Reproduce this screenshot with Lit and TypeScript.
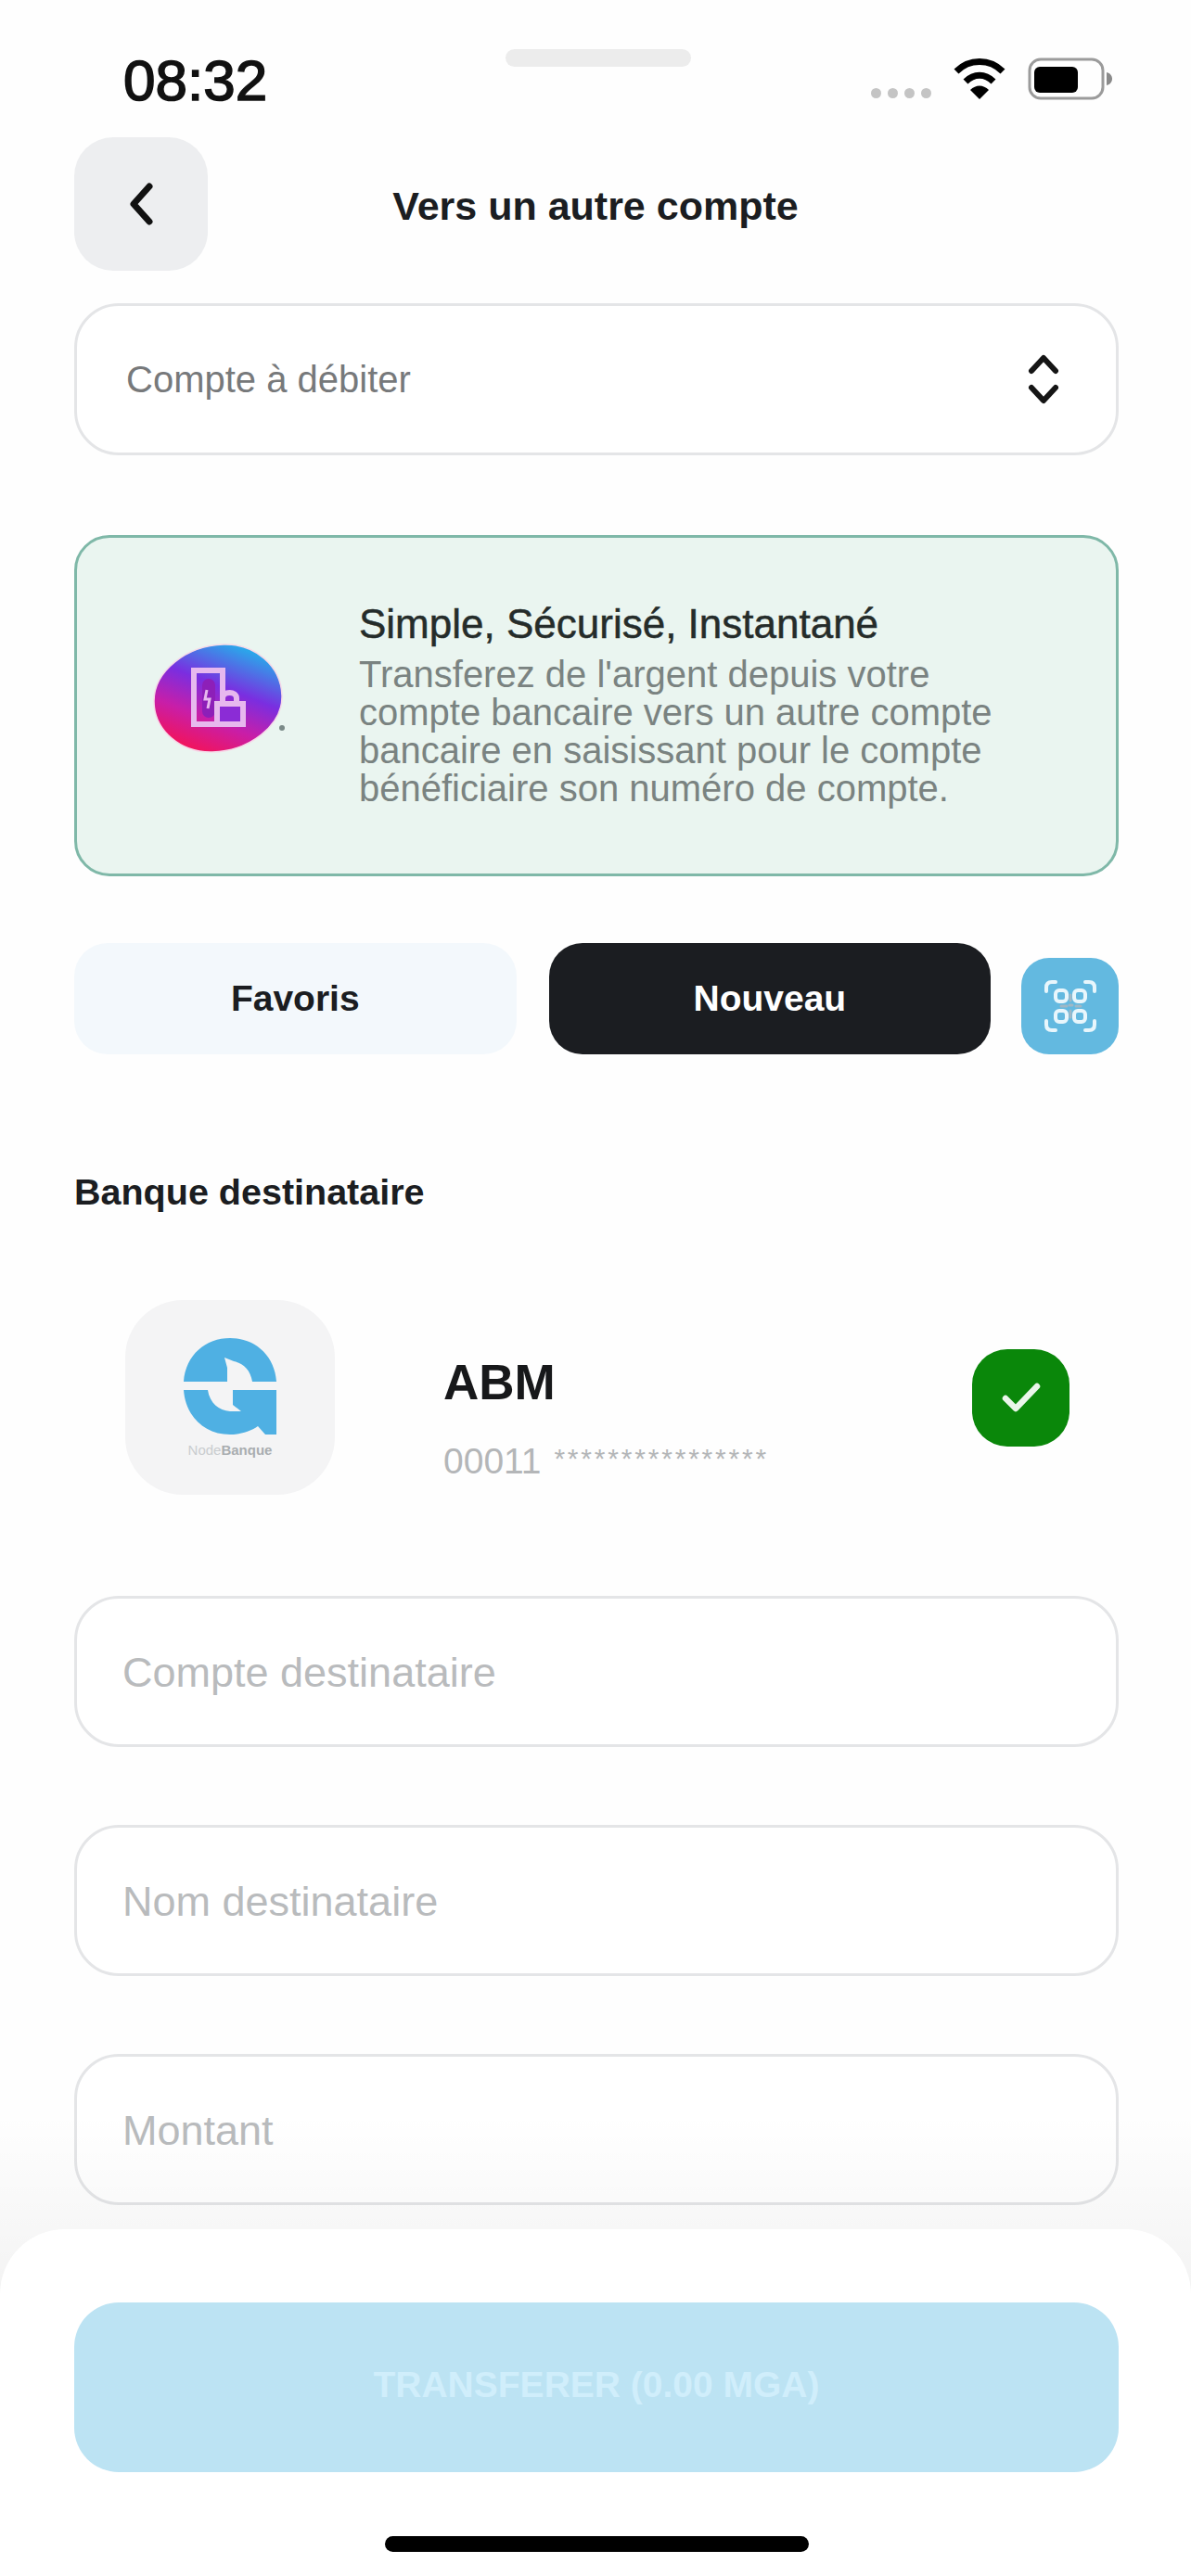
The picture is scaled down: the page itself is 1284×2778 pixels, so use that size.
import { LitElement, html, css } from 'lit';
import { customElement } from 'lit/decorators.js';

@customElement('app-root')
export class AppRoot extends LitElement {
  static styles = css`
    :host {
      display: block;
      position: relative;
      width: 1284px;
      height: 2778px;
      overflow: hidden;
      background: #fefefe;
      font-family: 'Liberation Sans', Arial, sans-serif;
      color: #1b1d21;
    }

    /* ── Status bar ── */
    .status {
      height: 148px;
      box-sizing: border-box;
      padding: 53px 84px 0 133px;
      display: grid;
      grid-template-columns: 412px 200px 1fr;
      align-items: start;
    }
    .time {
      font-size: 62px;
      line-height: 68px;
      color: #111;
      -webkit-text-stroke: 1.6px #111;
    }
    .island {
      height: 19px;
      border-radius: 10px;
      background: #ececec;
    }
    .status-icons {
      display: flex;
      justify-content: flex-end;
      align-items: flex-start;
      gap: 24px;
      padding-top: 9px;
    }
    .dots {
      display: flex;
      gap: 7px;
      margin-top: 33px;
    }
    .dots i {
      width: 11px;
      height: 11px;
      border-radius: 50%;
      background: #c4c4c4;
    }

    /* ── Header ── */
    .header {
      height: 144px;
      margin: 0 80px;
      display: grid;
      grid-template-columns: 144px 1fr 144px;
      align-items: center;
    }
    .back {
      width: 144px;
      height: 144px;
      border-radius: 42px;
      background: #edeef0;
      display: flex;
      align-items: center;
      justify-content: center;
    }
    .title {
      padding-top: 4px;
      text-align: center;
      font-size: 43px;
      font-weight: 700;
    }

    .content {
      padding: 35px 78px 0 80px;
      display: flex;
      flex-direction: column;
    }

    .field {
      height: 163px;
      padding: 2px 76px 0 49px;
      box-sizing: border-box;
      border: 3px solid #e4e5e7;
      border-radius: 48px;
      background: #fff;
      display: flex;
      align-items: center;
      justify-content: space-between;
      font-size: 45px;
      color: #b9bbbd;
    }
    .field.select {
      height: 164px;
      padding: 0 60px 0 53px;
      font-size: 40px;
      color: #77797b;
    }

    /* ── Info banner ── */
    .banner {
      margin-top: 86px;
      height: 368px;
      box-sizing: border-box;
      border: 3px solid #7fb8a8;
      border-radius: 38px;
      background: #eaf5f0;
      display: flex;
      align-items: flex-start;
      padding: 67px 0 0 82px;
    }
    .blob {
      flex: none;
      margin-top: 47px;
      margin-right: 80px;
    }
    .banner h2 {
      margin: 0 0 8px;
      font-size: 44px;
      line-height: 52px;
      font-weight: 400;
      color: #252c2a;
      -webkit-text-stroke: 0.5px #252c2a;
    }
    .banner p {
      margin: 0;
      font-size: 40px;
      line-height: 41px;
      color: #7a8381;
    }

    /* ── Tabs ── */
    .tabs {
      margin-top: 72px;
      display: flex;
      align-items: flex-end;
    }
    .tab {
      width: 477px;
      height: 120px;
      border-radius: 36px;
      display: flex;
      align-items: center;
      justify-content: center;
      font-size: 39px;
      font-weight: 700;
      background: #f3f8fc;
    }
    .tab.active {
      margin-left: 35px;
      background: #1b1d21;
      color: #fff;
    }
    .qr {
      margin-left: 33px;
      width: 105px;
      height: 104px;
      border-radius: 30px;
      background: #63b9e0;
      display: flex;
      align-items: center;
      justify-content: center;
    }

    .label {
      margin-top: 126px;
      font-size: 39.5px;
      line-height: 44px;
      font-weight: 700;
    }

    /* ── Bank row ── */
    .bank {
      margin-top: 95px;
      display: flex;
      align-items: center;
      padding: 0 53px 0 55px;
    }
    .tile {
      width: 226px;
      height: 210px;
      border-radius: 62px;
      background: #f4f4f5;
      display: flex;
      flex-direction: column;
      align-items: center;
      justify-content: center;
      flex: none;
    }
    .tile span {
      font-size: 15px;
      line-height: 16px;
      margin-top: 9px;
      font-weight: 700;
      color: #a9adb0;
    }
    .tile span em {
      font-style: normal;
      font-weight: 400;
      color: #c9cccf;
    }
    .bank-text {
      flex: 1;
      margin-left: 117px;
      padding-top: 43px;
    }
    .bank-name {
      font-size: 53px;
      line-height: 64px;
      font-weight: 700;
      color: #17181a;
    }
    .bank-num {
      margin-top: 27px;
      font-size: 39px;
      line-height: 46px;
      color: #b4b6b8;
    }
    .bank-num small {
      margin-left: 3px;
      font-size: 30px;
      letter-spacing: 2.8px;
      vertical-align: 6px;
    }
    .check {
      width: 105px;
      height: 105px;
      border-radius: 38px;
      background: #0a870a;
      display: flex;
      align-items: center;
      justify-content: center;
      flex: none;
    }

    .fields {
      margin-top: 109px;
      display: flex;
      flex-direction: column;
      gap: 84px;
    }

    /* ── Bottom sheet ── */
    .fade {
      position: absolute;
      left: 0;
      right: 0;
      bottom: 270px;
      height: 230px;
      background: linear-gradient(rgba(0, 0, 0, 0), rgba(0, 0, 0, 0.05));
    }
    .sheet {
      position: absolute;
      left: 0;
      right: 0;
      bottom: 0;
      height: 374px;
      box-sizing: border-box;
      padding: 79px 78px 0 80px;
      background: #fff;
      border-radius: 70px 70px 0 0;
    }
    .submit {
      height: 183px;
      padding-bottom: 6px;
      box-sizing: border-box;
      border-radius: 48px;
      background: #bce3f3;
      color: #d0eefb;
      display: flex;
      align-items: center;
      justify-content: center;
      font-size: 39px;
      font-weight: 700;
    }
    .home {
      width: 457px;
      height: 17px;
      margin: 69px auto 0;
      border-radius: 9px;
      background: #000;
    }
  `;

  render() {
    return html`
      <div class="status">
        <div class="time">08:32</div>
        <div class="island"></div>
        <div class="status-icons">
          <div class="dots"><i></i><i></i><i></i><i></i></div>
          <svg width="56" height="46" viewBox="0 0 56 46" fill="none" stroke="#000" stroke-width="7">
            <path d="M3 15 C17 1 39 1 53 15" />
            <path d="M13 26 C22 17 34 17 43 26" />
            <path d="M28 45 L18 35 C24 29 32 29 38 35 Z" fill="#000" stroke="none" />
          </svg>
          <svg width="92" height="46" viewBox="0 0 92 46" fill="none">
            <rect x="2" y="2" width="79" height="42" rx="12" stroke="#9b9b9b" stroke-width="3" />
            <rect x="7" y="10" width="47" height="28" rx="6" fill="#000" />
            <path d="M85 16 C89 17 91 20 91 23 C91 26 89 29 85 30 Z" fill="#8a8a8a" />
          </svg>
        </div>
      </div>

      <div class="header">
        <div class="back">
          <svg width="30" height="46" viewBox="0 0 30 46" fill="none" stroke="#111" stroke-width="7" stroke-linecap="round" stroke-linejoin="round">
            <path d="M24 4 L7 23 L24 42" />
          </svg>
        </div>
        <div class="title">Vers un autre compte</div>
        <div></div>
      </div>

      <div class="content">
        <div class="field select">
          <span>Compte à débiter</span>
          <svg width="36" height="54" viewBox="0 0 36 54" fill="none" stroke="#151515" stroke-width="6" stroke-linecap="round" stroke-linejoin="round">
            <path d="M5 18 L18 4 L31 18" />
            <path d="M5 36 L18 50 L31 36" />
          </svg>
        </div>

        <div class="banner">
          <svg class="blob" width="142" height="118" viewBox="0 0 142 118">
            <defs>
              <linearGradient id="blobFill" x1="0.82" y1="0.04" x2="0.38" y2="1">
                <stop offset="0.05" stop-color="#2ba6ea" />
                <stop offset="0.42" stop-color="#7a2ee0" />
                <stop offset="0.72" stop-color="#c81ea8" />
                <stop offset="1" stop-color="#f0145f" />
              </linearGradient>
            </defs>
            <path d="M1 62 C1 30 36 2 76 1 C110 0 138 24 139 56 C140 88 104 116 64 117 C30 118 1 94 1 62 Z" fill="url(#blobFill)" stroke="#f6d9e8" stroke-width="1.5" />
            <circle cx="139" cy="91" r="3" fill="#7b8a88" />
            <g fill="none" stroke="#e7b8ee" stroke-width="6">
              <rect x="44" y="29" width="31" height="58" />
              <rect x="53" y="38" width="14" height="42" rx="7" fill="#8d1fb8" stroke="none" />
              <path d="M58 50 L56 60 H61 L59 70" stroke="#e7b8ee" stroke-width="3" />
              <rect x="69" y="65" width="28" height="22" fill="#8b2cd6" />
              <path d="M75 65 V59 C75 51 90 51 90 59 V65" />
            </g>
          </svg>
          <div>
            <h2>Simple, Sécurisé, Instantané</h2>
            <p>Transferez de l'argent depuis votre<br />compte bancaire vers un autre compte<br />bancaire en saisissant pour le compte<br />bénéficiaire son numéro de compte.</p>
          </div>
        </div>

        <div class="tabs">
          <div class="tab">Favoris</div>
          <div class="tab active">Nouveau</div>
          <div class="qr">
            <svg width="56" height="56" viewBox="0 0 56 56" fill="none" stroke="#e8f6fc" stroke-width="4" stroke-linecap="round">
              <path d="M2 12 V8 C2 4 4 2 8 2 H12" />
              <path d="M44 2 H48 C52 2 54 4 54 8 V12" />
              <path d="M54 44 V48 C54 52 52 54 48 54 H44" />
              <path d="M12 54 H8 C4 54 2 52 2 48 V44" />
              <rect x="12" y="11" width="12" height="12" rx="4" />
              <rect x="32" y="11" width="12" height="12" rx="4" />
              <rect x="12" y="33" width="12" height="12" rx="4" />
              <rect x="32" y="33" width="12" height="12" rx="4" />
              <path d="M28 16 V22 M18 28 H24 M27 27 H30 M34 28 H39 M28 33 V40" stroke="#9fb8c6" stroke-width="3" />
            </svg>
          </div>
        </div>

        <div class="label">Banque destinataire</div>

        <div class="bank">
          <div class="tile">
            <svg width="100" height="104" viewBox="0 0 100 104" fill="#4fb0e3">
              <path d="M0 47 C2 18 24 0 50 0 C76 0 98 18 100 47 H74 C72 34 64 27 54 25 L44 21 L47 32 V47 Z" />
              <path d="M0 56 H26 C28 70 38 78 50 79 L62 79 L53 72 V56 H100 V104 H88 L80 95 C72 101 60 104 50 104 C22 104 2 84 0 56 Z" />
            </svg>
            <span><em>Node</em>Banque</span>
          </div>
          <div class="bank-text">
            <div class="bank-name">ABM</div>
            <div class="bank-num">00011 <small>****************</small></div>
          </div>
          <div class="check">
            <svg width="42" height="32" viewBox="0 0 42 32" fill="none" stroke="#eaf6ea" stroke-width="6.5" stroke-linecap="round" stroke-linejoin="round">
              <path d="M4 17 L15 28 L38 4" />
            </svg>
          </div>
        </div>

        <div class="fields">
          <div class="field">Compte destinataire</div>
          <div class="field">Nom destinataire</div>
          <div class="field">Montant</div>
        </div>
      </div>

      <div class="fade"></div>
      <div class="sheet">
        <div class="submit">TRANSFERER (0.00 MGA)</div>
        <div class="home"></div>
      </div>
    `;
  }
}
